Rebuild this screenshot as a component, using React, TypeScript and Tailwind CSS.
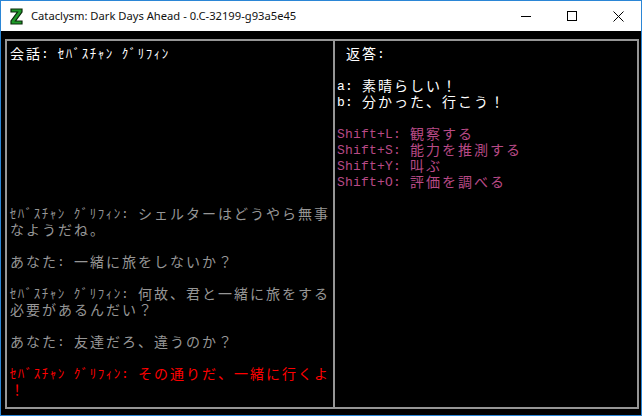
import React from "react";

type Line = { text: string; color: string };

const isWide = (ch: string) => {
  const c = ch.codePointAt(0) ?? 0;
  if (c >= 0xff61 && c <= 0xff9f) return false;
  return c > 0x2e7f;
};

const TermRow: React.FC<Line> = ({ text, color }) => (
  <div className={`flex h-[16px] leading-[16px] ${color}`}>
    {Array.from(text).map((ch, i) =>
      isWide(ch) ? (
        <span key={i} className="inline-block w-[16px] shrink-0 text-center text-[14px]">
          {ch}
        </span>
      ) : (
        <span key={i} className="inline-block w-[8px] shrink-0 text-center text-[13px]">
          {ch === " " ? "\u00a0" : ch}
        </span>
      )
    )}
  </div>
);

const GRAY = "text-[#969696]";
const WHITE = "text-white";
const RED = "text-[#ff0000]";
const PINK = "text-[#b84a86]";

const NAME = "ｾﾊﾞｽﾁｬﾝ ｸﾞﾘﾌｨﾝ";

const history: Line[] = [
  { text: `${NAME}: シェルターはどうやら無事`, color: GRAY },
  { text: "なようだね。", color: GRAY },
  { text: "", color: GRAY },
  { text: "あなた: 一緒に旅をしないか？", color: GRAY },
  { text: "", color: GRAY },
  { text: `${NAME}: 何故、君と一緒に旅をする`, color: GRAY },
  { text: "必要があるんだい？", color: GRAY },
  { text: "", color: GRAY },
  { text: "あなた: 友達だろ、違うのか？", color: GRAY },
  { text: "", color: GRAY },
  { text: `${NAME}: その通りだ、一緒に行くよ`, color: RED },
  { text: "！", color: RED },
];

const responses: Line[] = [
  { text: " 返答:", color: WHITE },
  { text: "", color: WHITE },
  { text: "a: 素晴らしい！", color: WHITE },
  { text: "b: 分かった、行こう！", color: WHITE },
  { text: "", color: WHITE },
  { text: "Shift+L: 観察する", color: PINK },
  { text: "Shift+S: 能力を推測する", color: PINK },
  { text: "Shift+Y: 叫ぶ", color: PINK },
  { text: "Shift+O: 評価を調べる", color: PINK },
];

const AppIcon = () => (
  <svg width="13" height="17" viewBox="0 0 13 17">
    <path
      d="M1 1 H12 V4 L5.5 13 H12 V16 H1 V13 L7.5 4 H1 Z"
      fill="#1f9a2a"
      stroke="#0b2a0b"
      strokeWidth="1.2"
    />
  </svg>
);

export default function App() {
  return (
    <div className="w-[642px] h-[416px] border border-[#2b86d6] flex flex-col bg-white overflow-hidden">
      <div className="h-[30px] flex items-center bg-white shrink-0">
        <div className="pl-[9px] pr-[8px] flex items-center">
          <AppIcon />
        </div>
        <span
          className="text-[11.2px] text-[#111]"
          style={{ fontFamily: '"Noto Sans", "Open Sans", sans-serif' }}
        >
          Cataclysm: Dark Days Ahead - 0.C-32199-g93a5e45
        </span>
        <div className="flex-1" />
        <div className="w-[46px] h-[30px] flex items-center justify-center">
          <div className="w-[10px] h-px bg-black" />
        </div>
        <div className="w-[46px] h-[30px] flex items-center justify-center">
          <div className="w-[10px] h-[10px] border border-black" />
        </div>
        <div className="w-[46px] h-[30px] flex items-center justify-center">
          <svg width="11" height="11" viewBox="0 0 11 11">
            <path d="M0.5 0.5 L10.5 10.5 M10.5 0.5 L0.5 10.5" stroke="#000" strokeWidth="1" />
          </svg>
        </div>
      </div>

      <div
        className="flex-1 bg-black pl-[4px] pt-[8px] pr-[2px] pb-[6px] flex"
        style={{ fontFamily: '"Liberation Mono", "Noto Sans CJK JP", monospace' }}
      >
        <div className="flex-1 flex border-2 border-[#969696]">
          <div className="w-[326px] shrink-0 flex flex-col pt-[6px] pl-[2px] pb-[8px]">
            <TermRow text={`会話: ${NAME}`} color={WHITE} />
            <div className="flex-1" />
            <div className="flex flex-col">
              {history.map((l, i) => (
                <TermRow key={i} text={l.text} color={l.color} />
              ))}
            </div>
          </div>
          <div className="flex-1 border-l-2 border-[#969696] flex flex-col pt-[6px] pl-[2px]">
            {responses.map((l, i) => (
              <TermRow key={i} text={l.text} color={l.color} />
            ))}
          </div>
        </div>
      </div>
    </div>
  );
}
